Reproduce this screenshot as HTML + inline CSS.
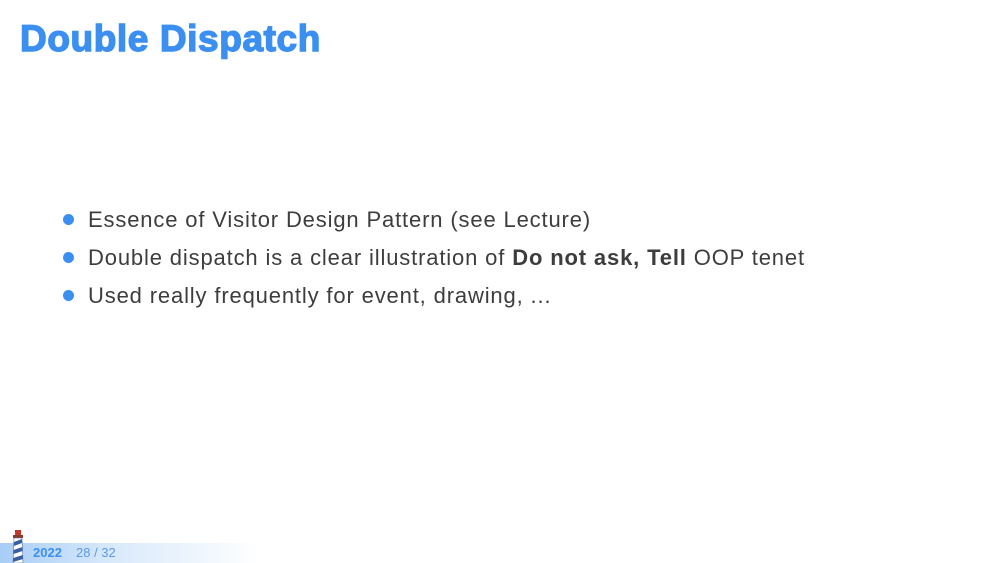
<!DOCTYPE html>
<html><head><style>
body{margin:0;width:1000px;height:563px;background:#fff;position:relative;overflow:hidden;font-family:"Liberation Sans",sans-serif}
.t{position:absolute;left:20px;top:20px;line-height:1;font-size:37px;font-weight:bold;color:#3b8ff0;-webkit-text-stroke:1.4px #3b8ff0;letter-spacing:0.6px;white-space:nowrap}
.b{position:absolute;left:88px;font-size:22px;letter-spacing:0.85px;color:#3d3d3d;white-space:nowrap}
.d{position:absolute;left:63px;width:11px;height:11px;border-radius:50%;background:#3b8ff0}
.f{position:absolute;left:0;top:543px;width:260px;height:20px;background:linear-gradient(90deg,#a8cdf6 0%,#d6e8fb 40%,#fff 100%)}
</style></head><body>
<div class="t">Double Dispatch</div>
<div class="d" style="top:214px"></div><div class="b" style="top:207px">Essence of Visitor Design Pattern (see Lecture)</div>
<div class="d" style="top:252px"></div><div class="b" style="top:245px">Double dispatch is a clear illustration of <b>Do not ask, Tell</b> OOP tenet</div>
<div class="d" style="top:290px"></div><div class="b" style="top:283px">Used really frequently for event, drawing, ...</div>
<div class="f"></div>
<svg style="position:absolute;left:10px;top:528px" width="16" height="35" viewBox="0 0 16 35">
<rect x="5" y="2" width="6" height="6" fill="#c0392b"/><rect x="3" y="7" width="10" height="3" fill="#8a3a2a"/>
<path d="M4 10 L12 10 L13 35 L3 35 Z" fill="#fff" stroke="#5577aa" stroke-width="0.6"/>
<path d="M4 14 L12 11 L12 15 L4 18 Z M3.5 22 L12.5 19 L12.6 23 L3.4 26 Z M3.2 30 L12.8 27 L13 31 L3 34 Z" fill="#3a5f9f"/>
</svg>
<div style="position:absolute;left:33px;top:545px;font-size:13px;font-weight:bold;color:#3b8ff0">2022</div>
<div style="position:absolute;left:76px;top:545px;font-size:13px;color:#5a9ae8">28 / 32</div>
</body></html>
